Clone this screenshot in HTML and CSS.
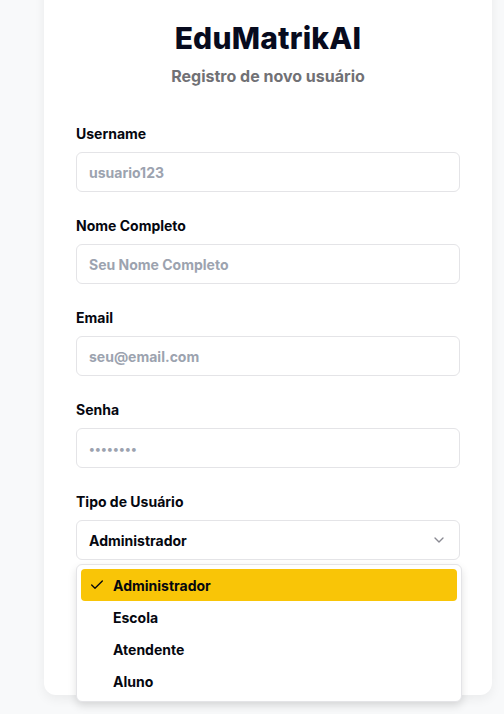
FILE: index.html
```html
<!DOCTYPE html>
<html lang="pt">
<head>
<meta charset="utf-8">
<link rel="stylesheet" href="styles.css">
</head>
<body>
<div class="page">
  <div class="card">
    <h1 class="title">EduMatrikAI</h1>
    <p class="subtitle">Registro de novo usuário</p>
    <div class="field">
      <label class="label">Username</label>
      <div class="input"><span class="ph">usuario123</span></div>
    </div>
    <div class="field">
      <label class="label">Nome Completo</label>
      <div class="input"><span class="ph">Seu Nome Completo</span></div>
    </div>
    <div class="field">
      <label class="label">Email</label>
      <div class="input"><span class="ph">seu@email.com</span></div>
    </div>
    <div class="field">
      <label class="label">Senha</label>
      <div class="input"><span class="ph dots">••••••••</span></div>
    </div>
    <div class="field last">
      <label class="label">Tipo de Usuário</label>
      <div class="select-wrap">
        <div class="input select">
          <span class="value">Administrador</span>
          <svg class="chev" width="16" height="16" viewBox="0 0 24 24" fill="none" stroke="currentColor" stroke-width="2" stroke-linecap="round" stroke-linejoin="round"><path d="m6 9 6 6 6-6"/></svg>
        </div>
        <div class="menu">
          <div class="opt active">
            <svg class="check" width="16" height="16" viewBox="0 0 24 24" fill="none" stroke="currentColor" stroke-width="2" stroke-linecap="round" stroke-linejoin="round"><path d="M20 6 9 17l-5-5"/></svg>
            <span>Administrador</span>
          </div>
          <div class="opt"><span>Escola</span></div>
          <div class="opt"><span>Atendente</span></div>
          <div class="opt"><span>Aluno</span></div>
        </div>
      </div>
    </div>
  </div>
</div>
</body>
</html>
```
FILE: styles.css
```css
* { box-sizing: border-box; }
html, body { margin: 0; padding: 0; }
body {
  background: #f8f9fa;
  font-family: Inter, "Liberation Sans", sans-serif;
  color: #0b0d17;
  height: 714px;
  overflow: hidden;
}
.page {
  padding-left: 44px;
  padding-right: 12px;
}
.card {
  margin-top: -20px;
  background: #ffffff;
  border-radius: 0 0 12px 12px;
  box-shadow: 0 4px 12px rgba(0,0,0,0.06);
  padding: 40px 32px 32px;
  height: 715px;
}
.title {
  margin: 0;
  text-align: center;
  font-size: 30px;
  font-weight: 800;
  line-height: 36px;
  color: #070b1e;
  letter-spacing: 0.2px;
}
.subtitle {
  margin: 8px 0 0;
  text-align: center;
  font-size: 16px;
  font-weight: 700;
  line-height: 24px;
  color: #717175;
}
.field {
  display: flex;
  flex-direction: column;
  margin-top: 36px;
}
.field + .field { margin-top: 24px; }
.label {
  font-size: 14px;
  font-weight: 700;
  line-height: 20px;
  color: #05070f;
  margin-bottom: 8px;
}
.input {
  height: 40px;
  border: 1px solid #e4e4e7;
  border-radius: 6px;
  display: flex;
  align-items: center;
  padding: 0 12px;
  font-size: 14px;
  font-weight: 700;
  background: #fff;
}
.ph { color: #9ca3af; }
.dots { font-size: 12px; letter-spacing: 0.3px; }
.select-wrap { position: relative; }
.select { justify-content: space-between; }
.value { color: #05070f; }
.chev { color: #8a8a93; width: 16px; height: 16px; }
.menu {
  position: absolute;
  top: 44px;
  left: 0;
  right: -2px;
  background: #fff;
  border: 1px solid #e4e4e7;
  border-radius: 6px;
  padding: 4px;
  box-shadow: 0 4px 8px rgba(0,0,0,0.12);
  display: flex;
  flex-direction: column;
}
.opt {
  height: 32px;
  display: flex;
  align-items: center;
  padding-left: 32px;
  position: relative;
  font-size: 14px;
  font-weight: 700;
  color: #05070f;
  border-radius: 4px;
}
.opt.active { background: #f9c507; }
.check {
  position: absolute;
  left: 8px;
  top: 8px;
}
```
